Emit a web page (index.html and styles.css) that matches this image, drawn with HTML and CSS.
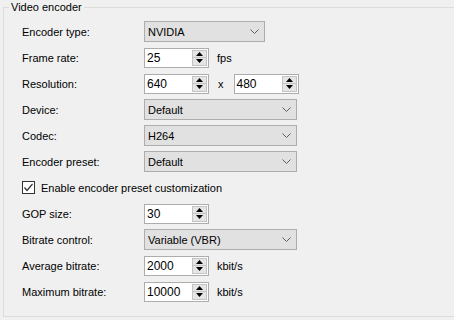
FILE: index.html
```html
<!DOCTYPE html>
<html lang="en">
<head>
    <meta charset="UTF-8">
    <title>Video encoder</title>
    <link rel="stylesheet" href="styles.css">
</head>
<body>
    <fieldset class="group">
        <legend>Video encoder</legend>
        <div class="form">
            <div class="row">
                <label class="label">Encoder type:</label>
                <div class="combo combo-short">
                    <span>NVIDIA</span>
                    <svg class="chevron" width="9" height="5" viewBox="0 0 9 5"><path d="M0.5 0.5 L4.5 4.5 L8.5 0.5" fill="none" stroke="#606060" stroke-width="1"/></svg>
                </div>
            </div>

            <div class="row">
                <label class="label">Frame rate:</label>
                <div class="spin">
                    <span class="spin-value">25</span>
                    <div class="spin-buttons">
                        <span class="spin-btn"><svg width="7" height="4" viewBox="0 0 7 4"><polygon points="3.5,0 7,4 0,4" fill="#000"/></svg></span>
                        <span class="spin-btn"><svg width="7" height="4" viewBox="0 0 7 4"><polygon points="0,0 7,0 3.5,4" fill="#000"/></svg></span>
                    </div>
                </div>
                <span class="unit">fps</span>
            </div>

            <div class="row">
                <label class="label">Resolution:</label>
                <div class="spin">
                    <span class="spin-value">640</span>
                    <div class="spin-buttons">
                        <span class="spin-btn"><svg width="7" height="4" viewBox="0 0 7 4"><polygon points="3.5,0 7,4 0,4" fill="#000"/></svg></span>
                        <span class="spin-btn"><svg width="7" height="4" viewBox="0 0 7 4"><polygon points="0,0 7,0 3.5,4" fill="#000"/></svg></span>
                    </div>
                </div>
                <span class="times">x</span>
                <div class="spin">
                    <span class="spin-value">480</span>
                    <div class="spin-buttons">
                        <span class="spin-btn"><svg width="7" height="4" viewBox="0 0 7 4"><polygon points="3.5,0 7,4 0,4" fill="#000"/></svg></span>
                        <span class="spin-btn"><svg width="7" height="4" viewBox="0 0 7 4"><polygon points="0,0 7,0 3.5,4" fill="#000"/></svg></span>
                    </div>
                </div>
            </div>

            <div class="row">
                <label class="label">Device:</label>
                <div class="combo">
                    <span>Default</span>
                    <svg class="chevron" width="9" height="5" viewBox="0 0 9 5"><path d="M0.5 0.5 L4.5 4.5 L8.5 0.5" fill="none" stroke="#606060" stroke-width="1"/></svg>
                </div>
            </div>

            <div class="row">
                <label class="label">Codec:</label>
                <div class="combo">
                    <span>H264</span>
                    <svg class="chevron" width="9" height="5" viewBox="0 0 9 5"><path d="M0.5 0.5 L4.5 4.5 L8.5 0.5" fill="none" stroke="#606060" stroke-width="1"/></svg>
                </div>
            </div>

            <div class="row">
                <label class="label">Encoder preset:</label>
                <div class="combo">
                    <span>Default</span>
                    <svg class="chevron" width="9" height="5" viewBox="0 0 9 5"><path d="M0.5 0.5 L4.5 4.5 L8.5 0.5" fill="none" stroke="#606060" stroke-width="1"/></svg>
                </div>
            </div>

            <div class="row">
                <span class="checkbox">
                    <svg width="11" height="11" viewBox="0 0 11 11"><path d="M1.5 5.5 L4 8.5 L9.5 2" fill="none" stroke="#333" stroke-width="1.2"/></svg>
                </span>
                <span class="check-label">Enable encoder preset customization</span>
            </div>

            <div class="row">
                <label class="label">GOP size:</label>
                <div class="spin">
                    <span class="spin-value">30</span>
                    <div class="spin-buttons">
                        <span class="spin-btn"><svg width="7" height="4" viewBox="0 0 7 4"><polygon points="3.5,0 7,4 0,4" fill="#000"/></svg></span>
                        <span class="spin-btn"><svg width="7" height="4" viewBox="0 0 7 4"><polygon points="0,0 7,0 3.5,4" fill="#000"/></svg></span>
                    </div>
                </div>
            </div>

            <div class="row">
                <label class="label">Bitrate control:</label>
                <div class="combo">
                    <span>Variable (VBR)</span>
                    <svg class="chevron" width="9" height="5" viewBox="0 0 9 5"><path d="M0.5 0.5 L4.5 4.5 L8.5 0.5" fill="none" stroke="#606060" stroke-width="1"/></svg>
                </div>
            </div>

            <div class="row">
                <label class="label">Average bitrate:</label>
                <div class="spin">
                    <span class="spin-value">2000</span>
                    <div class="spin-buttons">
                        <span class="spin-btn"><svg width="7" height="4" viewBox="0 0 7 4"><polygon points="3.5,0 7,4 0,4" fill="#000"/></svg></span>
                        <span class="spin-btn"><svg width="7" height="4" viewBox="0 0 7 4"><polygon points="0,0 7,0 3.5,4" fill="#000"/></svg></span>
                    </div>
                </div>
                <span class="unit">kbit/s</span>
            </div>

            <div class="row">
                <label class="label">Maximum bitrate:</label>
                <div class="spin">
                    <span class="spin-value">10000</span>
                    <div class="spin-buttons">
                        <span class="spin-btn"><svg width="7" height="4" viewBox="0 0 7 4"><polygon points="3.5,0 7,4 0,4" fill="#000"/></svg></span>
                        <span class="spin-btn"><svg width="7" height="4" viewBox="0 0 7 4"><polygon points="0,0 7,0 3.5,4" fill="#000"/></svg></span>
                    </div>
                </div>
                <span class="unit">kbit/s</span>
            </div>
        </div>
    </fieldset>
</body>
</html>
```

FILE: styles.css
```css
* {
    margin: 0;
    padding: 0;
    box-sizing: border-box;
}

body {
    font-family: 'Liberation Sans', Arial, sans-serif;
    font-size: 11px;
    background: #f0f0f0;
    color: #000;
    overflow: hidden;
}

.group {
    margin: 0 -20px 0 3px;
    border: 1px solid #dcdcdc;
    padding: 7px 0 14px 5px;
}

.group legend {
    padding: 0 2px;
    line-height: 14px;
}

.form {
    display: flex;
    flex-direction: column;
    gap: 5px;
    padding-left: 13px;
}

.row {
    display: flex;
    align-items: center;
    height: 21px;
}

.label {
    width: 122px;
}

.combo {
    display: flex;
    align-items: center;
    justify-content: space-between;
    width: 153px;
    height: 21px;
    padding: 0 5px 0 3px;
    background: #e1e1e1;
    border: 1px solid #adadad;
}

.combo-short {
    width: 121px;
}

.chevron {
    display: block;
}

.spin {
    display: flex;
    align-items: stretch;
    width: 65px;
    height: 20px;
    padding: 1px;
    background: #fff;
    border: 1px solid #adadad;
}

.spin-value {
    flex: 1;
    display: flex;
    align-items: center;
    padding-left: 1px;
    font-size: 12px;
}

.spin-buttons {
    display: flex;
    flex-direction: column;
    width: 15px;
}

.spin-btn {
    flex: 1;
    display: flex;
    align-items: center;
    justify-content: center;
    background: #e5e5e5;
    border: 1px solid #c4c4c4;
}

.spin-btn + .spin-btn {
    border-top: none;
}

.spin-btn svg {
    display: block;
}

.unit {
    margin-left: 8px;
}

.times {
    margin: 0 10px 0 9px;
}

.checkbox {
    display: flex;
    align-items: center;
    justify-content: center;
    width: 13px;
    height: 13px;
    margin-right: 6px;
    background: #fff;
    border: 1px solid #333;
}

.checkbox svg {
    display: block;
}
```
